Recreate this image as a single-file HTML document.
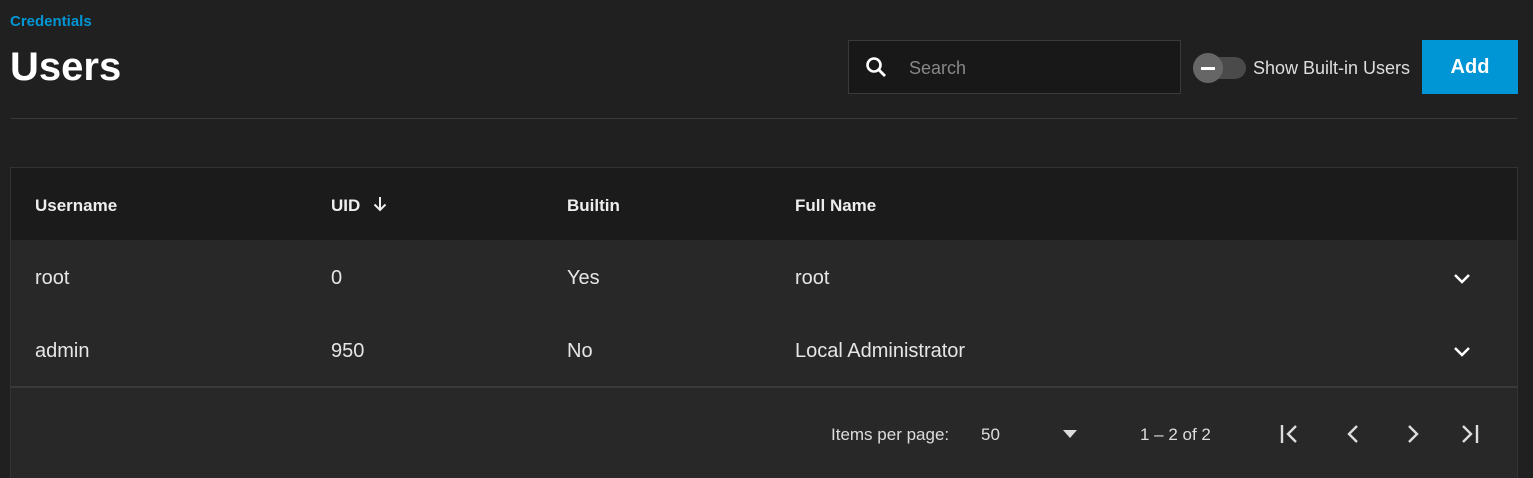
<!DOCTYPE html>
<html><head><style>
body{margin:0;width:1533px;height:475px;background:#202020;font-family:"Liberation Sans",sans-serif;color:#e6e6e6;position:relative;overflow:hidden}
.a{position:absolute}
.bc{left:10px;top:13px;color:#0095d5;font-size:15px;font-weight:bold}
h1{position:absolute;left:10px;top:45px;margin:0;font-size:40px;font-weight:bold;color:#fff;letter-spacing:0}
.search{left:848px;top:40px;width:331px;height:52px;background:#181818;border:1px solid #3a3a3a}
.tg{left:1193px;top:57px;width:53px;height:22px;border-radius:11px;background:#4a4a4a}
.knob{left:1193px;top:53px;width:30px;height:30px;border-radius:50%;background:#666}
.add{left:1422px;top:40px;width:96px;height:54px;background:#0095d5;color:#fff;font-weight:bold;font-size:20px;text-align:center;line-height:54px}
.hr{left:11px;top:118px;width:1506px;height:1px;background:#3a3a3a}
.tbl{left:10px;top:167px;width:1506px;height:310px;background:#282828;border:1px solid #333;border-bottom:none}
.hd{left:0;top:0;width:1506px;height:72px;background:#1b1b1b}
.th{font-weight:bold;font-size:17px;color:#eee;top:28px}
.td{font-size:20px;color:#e6e6e6}
.sep{left:0;top:218px;width:1506px;height:2px;background:#3a3a3a}
.f{font-size:17px;color:#ddd;top:257px}
</style></head><body>
<div class="a bc">Credentials</div>
<h1>Users</h1>
<div class="a search">
<svg class="a" style="left:16px;top:15px" width="22" height="22" viewBox="0 0 22 22"><circle cx="9" cy="9" r="6.5" stroke="#fff" stroke-width="2.6" fill="none"/><path d="M13.5 13.5L20 20" stroke="#fff" stroke-width="2.8"/></svg>
<div class="a" style="left:60px;top:17px;font-size:18px;color:#888">Search</div>
</div>
<div class="a tg"></div><div class="a knob"></div>
<div class="a" style="left:1201px;top:67px;width:14px;height:3px;background:#fff"></div>
<div class="a" style="left:1253px;top:58px;font-size:18px;color:#ddd">Show Built-in Users</div>
<div class="a add">Add</div>
<div class="a hr"></div>
<div class="a tbl">
<div class="a hd"></div>
<div class="a th" style="left:24px">Username</div>
<div class="a th" style="left:320px">UID</div>
<svg class="a" style="left:362px;top:28px" width="14" height="16"><path d="M7 1v13M1.5 8.5L7 14l5.5-5.5" stroke="#eee" stroke-width="2" fill="none"/></svg>
<div class="a th" style="left:556px">Builtin</div>
<div class="a th" style="left:784px">Full Name</div>
<div class="a td" style="left:24px;top:99px">root</div>
<div class="a td" style="left:320px;top:99px">0</div>
<div class="a td" style="left:556px;top:99px">Yes</div>
<div class="a td" style="left:784px;top:99px">root</div>
<svg class="a" style="left:1441px;top:104px" width="20" height="14"><path d="M3 3l7 7 7-7" stroke="#fff" stroke-width="2.5" fill="none"/></svg>
<div class="a td" style="left:24px;top:172px">admin</div>
<div class="a td" style="left:320px;top:172px">950</div>
<div class="a td" style="left:556px;top:172px">No</div>
<div class="a td" style="left:784px;top:172px">Local Administrator</div>
<svg class="a" style="left:1441px;top:177px" width="20" height="14"><path d="M3 3l7 7 7-7" stroke="#fff" stroke-width="2.5" fill="none"/></svg>
<div class="a sep"></div>
<div class="a f" style="left:820px">Items per page:</div>
<div class="a f" style="left:970px">50</div>
<svg class="a" style="left:1052px;top:262px" width="14" height="8"><path d="M0 0h14L7 8z" fill="#ddd"/></svg>
<div class="a f" style="left:1129px">1 – 2 of 2</div>
<svg class="a" style="left:1268px;top:255px" width="220" height="22" viewBox="0 0 220 22">
<g stroke="#ddd" stroke-width="2.4" fill="none"><path d="M3 2v18M17 3l-8 8 8 8"/><path d="M78 3l-8 8 8 8"/><path d="M130 3l8 8-8 8"/><path d="M184 3l8 8-8 8M198 2v18"/></g></svg>
</div>
</body></html>
